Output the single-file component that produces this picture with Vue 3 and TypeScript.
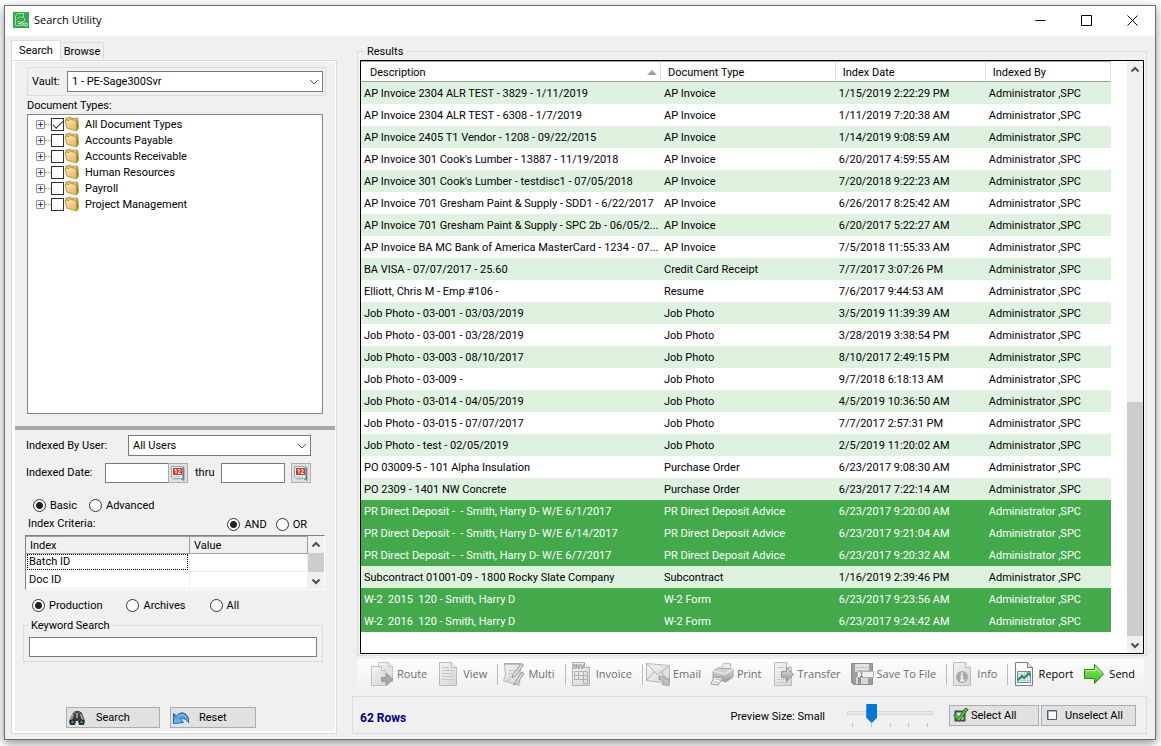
<script setup lang="ts">
import { computed, ref } from 'vue'

interface ResultRow {
  description: string
  type: string
  date: string
  selected?: boolean
}

interface DocType {
  name: string
  checked: boolean
}

interface Tool {
  label: string
  icon: string
  caption?: string
  enabled?: boolean
  separated?: boolean
}

const vault = ref('1 - PE-Sage300Svr')
const user = ref('All Users')
const dateFrom = ref('')
const dateTo = ref('')
const mode = ref('Basic')
const joiner = ref('AND')
const scope = ref('Production')
const keyword = ref('')
const previewSize = ref(1)

const docTypes = ref<DocType[]>([
  { name: 'All Document Types', checked: true },
  { name: 'Accounts Payable', checked: false },
  { name: 'Accounts Receivable', checked: false },
  { name: 'Human Resources', checked: false },
  { name: 'Payroll', checked: false },
  { name: 'Project Management', checked: false },
])

const criteria = ['Batch ID', 'Doc ID']

const rows = ref<ResultRow[]>([
  { description: 'AP Invoice 2304 ALR TEST - 3829 - 1/11/2019', type: 'AP Invoice', date: '1/15/2019 2:22:29 PM' },
  { description: 'AP Invoice 2304 ALR TEST - 6308 - 1/7/2019', type: 'AP Invoice', date: '1/11/2019 7:20:38 AM' },
  { description: 'AP Invoice 2405 T1 Vendor - 1208 - 09/22/2015', type: 'AP Invoice', date: '1/14/2019 9:08:59 AM' },
  { description: "AP Invoice 301 Cook's Lumber - 13887 - 11/19/2018", type: 'AP Invoice', date: '6/20/2017 4:59:55 AM' },
  { description: "AP Invoice 301 Cook's Lumber - testdisc1 - 07/05/2018", type: 'AP Invoice', date: '7/20/2018 9:22:23 AM' },
  { description: 'AP Invoice 701 Gresham Paint & Supply - SDD1 - 6/22/2017', type: 'AP Invoice', date: '6/26/2017 8:25:42 AM' },
  { description: 'AP Invoice 701 Gresham Paint & Supply - SPC 2b - 06/05/2...', type: 'AP Invoice', date: '6/20/2017 5:22:27 AM' },
  { description: 'AP Invoice BA MC Bank of America MasterCard - 1234 - 07...', type: 'AP Invoice', date: '7/5/2018 11:55:33 AM' },
  { description: 'BA VISA - 07/07/2017 - 25.60', type: 'Credit Card Receipt', date: '7/7/2017 3:07:26 PM' },
  { description: 'Elliott, Chris M - Emp #106 -', type: 'Resume', date: '7/6/2017 9:44:53 AM' },
  { description: 'Job Photo - 03-001 - 03/03/2019', type: 'Job Photo', date: '3/5/2019 11:39:39 AM' },
  { description: 'Job Photo - 03-001 - 03/28/2019', type: 'Job Photo', date: '3/28/2019 3:38:54 PM' },
  { description: 'Job Photo - 03-003 - 08/10/2017', type: 'Job Photo', date: '8/10/2017 2:49:15 PM' },
  { description: 'Job Photo - 03-009 -', type: 'Job Photo', date: '9/7/2018 6:18:13 AM' },
  { description: 'Job Photo - 03-014 - 04/05/2019', type: 'Job Photo', date: '4/5/2019 10:36:50 AM' },
  { description: 'Job Photo - 03-015 - 07/07/2017', type: 'Job Photo', date: '7/7/2017 2:57:31 PM' },
  { description: 'Job Photo - test - 02/05/2019', type: 'Job Photo', date: '2/5/2019 11:20:02 AM' },
  { description: 'PO 03009-5 - 101 Alpha Insulation', type: 'Purchase Order', date: '6/23/2017 9:08:30 AM' },
  { description: 'PO 2309 - 1401 NW Concrete', type: 'Purchase Order', date: '6/23/2017 7:22:14 AM' },
  { description: 'PR Direct Deposit -  - Smith, Harry D- W/E 6/1/2017', type: 'PR Direct Deposit Advice', date: '6/23/2017 9:20:00 AM', selected: true },
  { description: 'PR Direct Deposit -  - Smith, Harry D- W/E 6/14/2017', type: 'PR Direct Deposit Advice', date: '6/23/2017 9:21:04 AM', selected: true },
  { description: 'PR Direct Deposit -  - Smith, Harry D- W/E 6/7/2017', type: 'PR Direct Deposit Advice', date: '6/23/2017 9:20:32 AM', selected: true },
  { description: 'Subcontract 01001-09 - 1800 Rocky Slate Company', type: 'Subcontract', date: '1/16/2019 2:39:46 PM' },
  { description: 'W-2  2015  120 - Smith, Harry D', type: 'W-2 Form', date: '6/23/2017 9:23:56 AM', selected: true },
  { description: 'W-2  2016  120 - Smith, Harry D', type: 'W-2 Form', date: '6/23/2017 9:24:42 AM', selected: true },
])

const tools: Tool[] = [
  { label: 'Route', icon: 'route' },
  { label: 'View', icon: 'view' },
  { label: 'Multi', icon: 'multi', separated: true },
  { label: 'Invoice', icon: 'invoice', caption: 'INV', separated: true },
  { label: 'Email', icon: 'email', separated: true },
  { label: 'Print', icon: 'print' },
  { label: 'Transfer', icon: 'transfer' },
  { label: 'Save To File', icon: 'save' },
  { label: 'Info', icon: 'info', separated: true },
  { label: 'Report', icon: 'report', enabled: true, separated: true },
  { label: 'Send', icon: 'send', enabled: true },
]

const sizeNames = ['Tiny', 'Small', 'Medium', 'Large', 'Huge']
const sizeName = computed(() => sizeNames[Number(previewSize.value)])

function setAll(selected: boolean) {
  rows.value.forEach((row) => { row.selected = selected })
}
</script>

<template>
  <svg class="sprites" aria-hidden="true">
    <defs>
      <linearGradient id="g-paper" x1="0" y1="0" x2="1" y2="1">
        <stop offset="0" stop-color="#f4f4f4" /><stop offset="1" stop-color="#d6d6d6" />
      </linearGradient>
      <linearGradient id="g-metal" x1="0" y1="0" x2="0" y2="1">
        <stop offset="0" stop-color="#dcdcdc" /><stop offset="1" stop-color="#9c9c9c" />
      </linearGradient>
      <linearGradient id="g-folder" x1="0" y1="0" x2="1" y2="1">
        <stop offset="0" stop-color="#fbe9b4" /><stop offset=".5" stop-color="#fbc795" /><stop offset="1" stop-color="#c4c23e" />
      </linearGradient>
      <linearGradient id="g-green" x1="0" y1="0" x2="0" y2="1">
        <stop offset="0" stop-color="#a5f07c" /><stop offset=".5" stop-color="#5fd83c" /><stop offset="1" stop-color="#3fb81f" />
      </linearGradient>
      <linearGradient id="g-blue" x1="0" y1="0" x2="0" y2="1">
        <stop offset="0" stop-color="#2d7fc4" /><stop offset="1" stop-color="#7cc6f2" />
      </linearGradient>
    </defs>
    <symbol id="route" viewBox="0 0 24 24">
      <path d="M8.500 .5h10l4 4v15h-14z" fill="url(#g-paper)" stroke="#c4c4c4" />
      <path d="M18.500 .5v4h4" fill="#eee" stroke="#c4c4c4" />
      <path d="M1.500 4.500h10l4 4v15h-14z" fill="url(#g-paper)" stroke="#c0c0c0" />
      <path d="M11.500 4.500v4h4" fill="#f6f6f6" stroke="#c0c0c0" />
      <path d="M11.500 15.500h5v-4l6.500 6-6.500 6v-4h-5z" fill="#a9a9a9" stroke="#989898" />
    </symbol>
    <symbol id="view" viewBox="0 0 24 24">
      <path d="M3.500 .5h12l5 5v18h-17z" fill="url(#g-paper)" stroke="#bcbcbc" />
      <path d="M15.500 .5v5h5" fill="#f6f6f6" stroke="#bcbcbc" />
      <path d="M6 8.500h12M6 11.500h12M6 14.500h12M6 17.500h12M6 5.500h7" stroke="#c9c9c9" />
    </symbol>
    <symbol id="multi" viewBox="0 0 24 24">
      <path d="M3.500 1.500h15l1 4-1 18-16-5 2-5z" fill="url(#g-paper)" stroke="#b5b5b5" />
      <path d="M3.500 2h18" stroke="#9a9a9a" stroke-width="2" stroke-dasharray="1 1" />
      <path d="M7 8.500h7M7 11.500h4M8 15h3M5 18h5" stroke="#c6c6c6" />
      <path d="m12 12 8.500-10.500 2 1.500L14 14.500l-3 1z" fill="#dcdcdc" stroke="#999" />
      <path d="m14 20 7-10 2 1.500-7 10-3.500 1.500z" fill="#dcdcdc" stroke="#999" />
    </symbol>
    <symbol id="invoice" viewBox="0 0 24 24">
      <path d="M3.500 .5h12l5 5v18h-17z" fill="url(#g-paper)" stroke="#b0b0b0" />
      <path d="M15.500 .5v5h5" fill="#f6f6f6" stroke="#b0b0b0" />
      <path d="M5.500 9.500h13v8h-13zM5.500 13.500h13M9.500 9.500v8M14.500 9.500v12M14.500 21.500h4v-4" fill="none" stroke="#b0b0b0" />
    </symbol>
    <symbol id="email" viewBox="0 0 24 24">
      <path d="m.5 1.500 23 2v18l-23-3z" fill="url(#g-paper)" stroke="#b9b9b9" />
      <path d="m.5 1.500 11 11 12-9M.5 18.500l8-9M23.500 21.500l-8-11.500" fill="none" stroke="#adadad" />
      <path d="M13 14.500c4-1 6 0 7 3l3-1v7l-7-1 2-2c-1-2-3-3-5-3z" fill="#c2c2c2" stroke="#9b9b9b" />
    </symbol>
    <symbol id="print" viewBox="0 0 24 24">
      <path d="m10 8 4-7 7 1-2 8z" fill="#eee" stroke="#b8b8b8" />
      <path d="m3 9 5-3 15 1v8l-7 5-13-4z" fill="url(#g-metal)" stroke="#a3a3a3" />
      <path d="m3 9 12 3 8-5" fill="none" stroke="#e4e4e4" stroke-width="2" />
      <path d="m4 15 9 1-5 7-7-1z" fill="#f1f1f1" stroke="#9d9d9d" />
      <path d="m5 17 6 1M4 20l5 1" stroke="#bdbdbd" />
    </symbol>
    <symbol id="transfer" viewBox="0 0 24 24">
      <path d="M3.500 .5h12l5 5v18h-17z" fill="url(#g-paper)" stroke="#bcbcbc" />
      <path d="M15.500 .5v5h5" fill="#f6f6f6" stroke="#bcbcbc" />
      <path d="M6 5.500h7M6 17.500h12M6 20.500h12" stroke="#c9c9c9" />
      <path d="M10.500 9.500h5v-4l7 7-7 7v-4h-5z" fill="url(#g-metal)" stroke="#949494" />
    </symbol>
    <symbol id="save" viewBox="0 0 24 24">
      <path d="M1.500 1.500h21v21h-19l-2-2z" fill="#9d9d9d" stroke="#8b8b8b" />
      <path d="M5 2h14v8H5z" fill="#e2e2e2" />
      <path d="M5 5.500h14M5 8.500h14" stroke="#c2c2c2" />
      <path d="M6 15h12v7H6z" fill="#d8d8d8" /><path d="M8 16h3v6H8z" fill="#909090" />
      <path d="M7.500 9.500h16v6h-16z" fill="#f0f0f0" stroke="#b0b0b0" />
      <path d="M10 11h3M11.500 11v3M10 14.500h3" stroke="#8a8a8a" />
    </symbol>
    <symbol id="info" viewBox="0 0 24 24">
      <path d="M3.500 .5h12l5 5v18h-17z" fill="url(#g-paper)" stroke="#bcbcbc" />
      <path d="M15.500 .5v5h5" fill="#f6f6f6" stroke="#bcbcbc" />
      <circle cx="12" cy="15" r="6" fill="#a8a8a8" />
      <path d="M12 10.500v2M10.500 14H12v4.500M10 18.500h4.500" fill="none" stroke="#eee" stroke-width="2" />
    </symbol>
    <symbol id="report" viewBox="0 0 24 24">
      <path d="M3.500 .5h12l5 5v18h-17z" fill="#fbfbfb" stroke="#777d84" />
      <path d="M15.500 .5v5h5" fill="#dfe3e8" stroke="#777d84" />
      <path d="M5.500 9.500h13v11h-13z" fill="#e3f1fb" stroke="#6d8ba8" />
      <path d="M6 12.500h12M6 15.500h12M6 18.500h12M9.500 10v10M12.500 10v10M15.500 10v10" stroke="#b6d2e8" />
      <path d="m6 18 4-4 2 2 5-4.500" fill="none" stroke="#27933a" stroke-width="2" />
      <path d="M14 10.500h4v4z" fill="#27933a" />
    </symbol>
    <symbol id="send" viewBox="0 0 24 24">
      <path d="M2.500 7.500h10v-5l9 9.500-9 9.500v-5h-10z" fill="url(#g-green)" stroke="#2f8a1c" stroke-linejoin="round" />
      <path d="M3.500 8.500h10v-3.500l6 6.500" fill="none" stroke="#c5f8a8" />
    </symbol>
    <symbol id="folder" viewBox="0 0 16 16">
      <path d="M1.500 2.500 6 1l2 1.500L13.500 2l1 10-2 3z" fill="#e3c45c" stroke="#b8963c" stroke-linejoin="round" />
      <path d="m1 4 4 .5L6.500 3l6 2v10L2.500 12z" fill="url(#g-folder)" stroke="#c09c40" stroke-linejoin="round" />
      <path d="m12.500 5 1.500-2 .5 9-2 3z" fill="#a88a2c" />
    </symbol>
    <symbol id="calendar" viewBox="0 0 16 16">
      <path d="m11 1.500 3 1v13l-3-1.500z" fill="#5f7482" stroke="#7e909c" />
      <path d="M1.500 1.500h11v12l-9 .5-2-2z" fill="#e6eff5" stroke="#8fa3b0" />
      <path d="M3 3h9v7H3z" fill="#cf3a1d" />
      <path d="M4.500 5 6 4.500v4M8 5.500C8 4 10.500 4 10.500 5.500L8 8.500h3" fill="none" stroke="#fff" />
      <path d="M3 12h7" stroke="#a9c3d4" />
    </symbol>
    <symbol id="binoculars" viewBox="0 0 16 16">
      <path d="m4 3 3-2h3l3 2 3 8-1 4h-5l-1-4H7l-1 4H1l-1-4z" fill="#3a3a38" />
      <path d="M4.500 4 2 10M11.500 4 14 10M8 3v5" stroke="#9c968b" stroke-width="2" />
      <circle cx="3.500" cy="12" r="2" fill="#3f86b5" stroke="#16191c" />
      <circle cx="12.500" cy="12" r="2" fill="#3f86b5" stroke="#16191c" />
      <path d="M5 2.500h2M9 2.500h2" stroke="#6f695f" stroke-width="2" />
    </symbol>
    <symbol id="undo" viewBox="0 0 16 16">
      <path d="m.5 3.500 3 2.500C7 1 14 2 15.500 9v3.500C13 9 10 8 7.500 9l3 3.500-10 1z" fill="url(#g-blue)" stroke="#1d65a6" stroke-linejoin="round" />
      <path d="M4 7.500C7 4 11 4 13 7" fill="none" stroke="#b9e1f8" />
    </symbol>
    <symbol id="tick" viewBox="0 0 16 16">
      <path d="M2.500 4.500h9v9h-9z" fill="#e6ebee" stroke="#3d4d57" stroke-width="2" />
      <path d="m2.500 6.500 3 4L12.500 1l2.500 1.500L6 14.500 .5 8.500z" fill="#5bbb3b" stroke="#1f6d12" stroke-linejoin="round" />
    </symbol>
    <symbol id="box" viewBox="0 0 16 16">
      <path d="M3.500 3.500h9v9h-9z" fill="#fafafa" stroke="#4c5b69" />
      <path d="M4.500 12V4.500H12" fill="none" stroke="#9db4c6" />
    </symbol>
    <symbol id="logo" viewBox="0 0 16 16">
      <path d="M0 0h16v16H0z" fill="#35a84a" />
      <path d="M2.500 13V4l2-2.500h6V5M2.500 13.500H7" fill="none" stroke="#a6dcae" />
      <path d="M4.500 6.500c2-2 6-2 7 0M4.500 9c2 1.500 5 1.500 7 0V6.500" fill="none" stroke="#a6dcae" />
      <path d="M5 11.500h3" stroke="#c8ebcd" />
      <circle cx="9" cy="12" r="1.500" fill="none" stroke="#d9f2dc" />
      <circle cx="13" cy="12.500" r="1.500" fill="none" stroke="#d9f2dc" />
    </symbol>
    <symbol id="up" viewBox="0 0 10 10"><path d="m1.500 6.500 3.500-3.500 3.500 3.500" fill="none" stroke="#505050" stroke-width="2" /></symbol>
    <symbol id="down" viewBox="0 0 10 10"><path d="m1.500 3.500 3.500 3.500 3.500-3.500" fill="none" stroke="#505050" stroke-width="2" /></symbol>
    <symbol id="chevron" viewBox="0 0 10 10"><path d="m1 3 4 4 4-4" fill="none" stroke="#555" /></symbol>
  </svg>

  <div class="desktop">
    <div class="window">
      <header class="titlebar">
        <svg class="i16"><use href="#logo" /></svg>
        <h1>Search Utility</h1>
        <button class="caption" aria-label="Minimize">
          <svg viewBox="0 0 11 11"><path d="M.5 5.500h10" /></svg>
        </button>
        <button class="caption" aria-label="Maximize">
          <svg viewBox="0 0 11 11"><path d="M.5 .5h10v10H.5z" /></svg>
        </button>
        <button class="caption" aria-label="Close">
          <svg viewBox="0 0 11 11"><path d="m.5 .5 10 10M10.500 .5l-10 10" /></svg>
        </button>
      </header>

      <main class="client">
        <section class="side">
          <div class="tabs" role="tablist">
            <button class="tab active" role="tab" aria-selected="true">Search</button>
            <button class="tab" role="tab" aria-selected="false">Browse</button>
          </div>
          <div class="page">
            <div class="upper">
              <div class="vault">
                <label for="vault">Vault:</label>
                <span class="picker">
                  <select id="vault" v-model="vault"><option>1 - PE-Sage300Svr</option></select>
                  <svg class="i10"><use href="#chevron" /></svg>
                </span>
              </div>
              <h2>Document Types:</h2>
              <ul class="tree">
                <li v-for="doc in docTypes" :key="doc.name">
                  <button class="expander" :aria-label="`Expand ${doc.name}`">
                    <svg viewBox="0 0 7 7"><path d="M1 3.500h5M3.500 1v5" /></svg>
                  </button>
                  <label>
                    <input v-model="doc.checked" type="checkbox">
                    <svg class="i16"><use href="#folder" /></svg>
                    <span>{{ doc.name }}</span>
                  </label>
                </li>
              </ul>
            </div>
            <div class="splitter"></div>
            <div class="lower">
              <div class="row user">
                <label for="user">Indexed By User:</label>
                <span class="picker">
                  <select id="user" v-model="user"><option>All Users</option></select>
                  <svg class="i10"><use href="#chevron" /></svg>
                </span>
              </div>
              <div class="row dates">
                <label for="from">Indexed Date:</label>
                <input id="from" v-model="dateFrom" type="text">
                <button class="cal joined" aria-label="Pick start date"><svg class="i16"><use href="#calendar" /></svg></button>
                <label class="thru" for="to">thru</label>
                <input id="to" v-model="dateTo" type="text">
                <button class="cal" aria-label="Pick end date"><svg class="i16"><use href="#calendar" /></svg></button>
              </div>
              <div class="row modes">
                <label v-for="m in ['Basic', 'Advanced']" :key="m" class="radio">
                  <input v-model="mode" type="radio" name="mode" :value="m"><span>{{ m }}</span>
                </label>
              </div>
              <div class="row joiners">
                <span class="caption-text">Index Criteria:</span>
                <label v-for="j in ['AND', 'OR']" :key="j" class="radio">
                  <input v-model="joiner" type="radio" name="joiner" :value="j"><span>{{ j }}</span>
                </label>
              </div>
              <div class="criteria">
                <table>
                  <colgroup><col class="c-index"><col></colgroup>
                  <thead><tr><th>Index</th><th>Value</th></tr></thead>
                  <tbody>
                    <tr v-for="(c, i) in criteria" :key="c">
                      <td><span :class="{ focused: i === 0 }">{{ c }}</span></td><td></td>
                    </tr>
                  </tbody>
                </table>
                <div class="scroll small">
                  <button aria-label="Scroll up"><svg class="i10"><use href="#up" /></svg></button>
                  <div class="track"><div class="thumb"></div></div>
                  <button aria-label="Scroll down"><svg class="i10"><use href="#down" /></svg></button>
                </div>
              </div>
              <div class="row scopes">
                <label v-for="s in ['Production', 'Archives', 'All']" :key="s" class="radio">
                  <input v-model="scope" type="radio" name="scope" :value="s"><span>{{ s }}</span>
                </label>
              </div>
              <fieldset class="keyword">
                <legend>Keyword Search</legend>
                <input v-model="keyword" type="text" aria-label="Keyword Search">
              </fieldset>
              <div class="row actions">
                <button class="push search"><svg class="i16"><use href="#binoculars" /></svg><span>Search</span></button>
                <button class="push reset"><svg class="i16"><use href="#undo" /></svg><span>Reset</span></button>
              </div>
            </div>
          </div>
        </section>

        <section class="content">
          <fieldset class="results">
            <legend>Results</legend>
            <div class="list">
              <div class="grid">
                <table>
                  <colgroup><col class="c-desc"><col class="c-type"><col class="c-date"><col></colgroup>
                  <thead>
                    <tr>
                      <th><span class="sorted">Description<i></i></span></th>
                      <th>Document Type</th>
                      <th>Index Date</th>
                      <th>Indexed By</th>
                    </tr>
                  </thead>
                  <tbody>
                    <tr v-for="row in rows" :key="row.description" :class="{ selected: row.selected }">
                      <td>{{ row.description }}</td>
                      <td>{{ row.type }}</td>
                      <td>{{ row.date }}</td>
                      <td>Administrator ,SPC</td>
                    </tr>
                  </tbody>
                </table>
              </div>
              <div class="scroll">
                <button aria-label="Scroll up"><svg class="i10"><use href="#up" /></svg></button>
                <div class="track"><div class="thumb"></div></div>
                <button aria-label="Scroll down"><svg class="i10"><use href="#down" /></svg></button>
              </div>
            </div>
          </fieldset>

          <div class="toolbar" role="toolbar">
            <template v-for="tool in tools" :key="tool.label">
              <span v-if="tool.separated" class="sep"></span>
              <button :disabled="!tool.enabled">
                <svg class="i24">
                  <use :href="`#${tool.icon}`" />
                  <text v-if="tool.caption" class="icon-text" x="4" y="7">{{ tool.caption }}</text>
                </svg>
                <span>{{ tool.label }}</span>
              </button>
            </template>
          </div>

          <footer class="status">
            <strong>62 Rows</strong>
            <label for="size">Preview Size: {{ sizeName }}</label>
            <div class="slider">
              <input id="size" v-model="previewSize" type="range" min="0" max="4">
              <div class="ticks"><i v-for="n in 5" :key="n"></i></div>
            </div>
            <button class="push all" @click="setAll(true)"><svg class="i16"><use href="#tick" /></svg><span>Select All</span></button>
            <button class="push none" @click="setAll(false)"><svg class="i16"><use href="#box" /></svg><span>Unselect All</span></button>
          </footer>
        </section>
      </main>
    </div>
  </div>
</template>

<style>
body { margin: 0; background: #fff; }
</style>

<style scoped>
* { box-sizing: border-box; }
.sprites { position: absolute; width: 0; height: 0; }
svg { display: block; flex: none; }
.i10 { width: 10px; height: 10px; }
.i16 { width: 16px; height: 16px; }
.i24 { width: 24px; height: 24px; }
button, input, select { font: inherit; color: inherit; border-radius: 0; margin: 0; }
button { padding: 0; border: 0; background: none; white-space: nowrap; }
h1, h2 { margin: 0; font: inherit; }
fieldset { margin: 0; min-width: 0; border: 1px solid #dcdcdc; }
table { border-collapse: separate; border-spacing: 0; table-layout: fixed; width: 100%; }
th, td { padding: 0; text-align: left; font-weight: 400; white-space: pre; overflow: hidden; }

.desktop {
  display: flex;
  min-height: 100vh;
  padding: 5px 5px 6px 4px;
  overflow: hidden;
  font: 11px/14px Roboto, "Liberation Sans", sans-serif;
  color: #000;
}
.window {
  flex: 1;
  display: flex;
  flex-direction: column;
  min-width: 0;
  border: 1px solid #6e6e6e;
  background: #f0f0f0;
  box-shadow: 0 3px 9px rgba(0, 0, 0, .45);
}
.titlebar { display: flex; align-items: center; height: 30px; padding: 0 0 2px 8px; background: #fff; }
.titlebar h1 { flex: 1; margin-left: 5px; font: 11px/16px "Open Sans", "Noto Sans", sans-serif; }
.caption { display: flex; justify-content: center; align-items: center; width: 46px; height: 28px; }
.caption svg { width: 11px; height: 11px; fill: none; stroke: #000; }
.client { flex: 1; display: flex; gap: 15px; padding: 4px 8px 5px 6px; }

.side { flex: none; display: flex; flex-direction: column; width: 326px; }
.tabs { display: flex; align-items: flex-end; height: 20px; }
.tab { width: 43px; height: 18px; border: 1px solid #dcdcdc; border-width: 1px 1px 0 0; background: #f0f0f0; }
.tab.active { width: 50px; height: 20px; border-left-width: 1px; background: #fff; }
.page { flex: 1; display: flex; flex-direction: column; padding: 1px 1px 2px 3px; border: 1px solid #dcdcdc; background: #fff; }
.upper { flex: 1; display: flex; flex-direction: column; padding: 5px 12px 12px; background: #f0f0f0; }
.vault { display: flex; align-items: center; height: 29px; margin-right: -3px; padding: 0 2px 0 4px; border: 1px solid #dcdcdc; }
.vault label { width: 35px; }
.upper h2 { padding-top: 2px; line-height: 16px; }
.tree { flex: 1; margin: 0; padding: 1px 8px; border: 1px solid #828790; background: #fff; list-style: none; }
.tree li { display: flex; align-items: center; height: 16px; }
.expander { width: 9px; height: 9px; border: 1px solid #919191; border-radius: 1px; background: #f4f4f4; }
.expander svg { width: 7px; height: 7px; fill: none; stroke: #2d4a9c; }
.tree label { display: flex; align-items: center; }
.tree label::before { content: ""; width: 6px; border-top: 1px dotted #909090; }
.tree input { appearance: none; width: 13px; height: 13px; border: 1px solid #333; background: #fff; }
.tree input:checked::before { content: ""; display: block; width: 9px; height: 4px; margin: 2px 1px; border: solid #333; border-width: 0 0 1px 1px; transform: rotate(-45deg); }
.tree span { margin-left: 5px; padding-top: 2px; }
.picker { flex: 1; position: relative; display: flex; }
.picker select { appearance: none; width: 100%; height: 21px; padding: 0 4px; border: 1px solid #7a7a7a; background: #fff; }
.picker svg { position: absolute; right: 4px; top: 6px; pointer-events: none; }
.splitter { height: 4px; background: #a8a8a8; }
.lower { padding: 5px 10px 3px 8px; background: #f0f0f0; }
.row { display: flex; align-items: center; }
.user { padding: 0 14px 0 3px; }
.user label { width: 102px; }
.dates { margin-top: 7px; padding-left: 3px; }
.dates label { width: 79px; }
.dates .thru { width: 26px; }
.dates input { width: 64px; height: 20px; padding: 0 3px; border: 1px solid #7a7a7a; background: #fff; }
.cal { display: flex; justify-content: center; align-items: center; width: 20px; height: 20px; margin-left: 6px; border: 1px solid #adadad; background: #e1e1e1; }
.cal.joined { margin: 0 7px 0 -1px; }
.modes { gap: 12px; margin-top: 15px; padding-left: 10px; }
.joiners { gap: 9px; margin-top: 5px; padding: 0 18px 0 5px; }
.caption-text { flex: 1; }
.radio { display: flex; align-items: center; gap: 4px; height: 14px; }
.radio span { padding-top: 1px; }
.radio input { appearance: none; width: 13px; height: 13px; border: 1px solid #333; border-radius: 50%; background: #fff; }
.radio input:checked { background: radial-gradient(circle, #222 0 3px, #fff 4px); }
.criteria { display: flex; width: 300px; height: 55px; margin: 4px 0 0 2px; border: 1px solid #fff; border-color: #828282 #fff #fff #828282; background: #fff; }
.criteria table { flex: 1; }
.c-index { width: 164px; }
.criteria th { height: 18px; padding: 1px 0 0 4px; border: 1px solid #a0a0a0; border-width: 1px 1px 1px 0; background: #f0f0f0; }
.criteria td { height: 17px; padding: 0 1px; border: 1px solid #f0f0f0; border-width: 0 1px 1px 0; }
.criteria td span { display: block; padding: 0 1px; border: 1px solid transparent; }
.criteria td .focused { border: 1px dotted #000; }
.scopes { gap: 24px; margin-top: 8px; padding-left: 9px; }
.keyword { margin: 5px 2px 0 0; padding: 4px 5px; }
.keyword legend { padding: 2px 2px 0; }
.keyword input { display: block; width: 100%; height: 20px; border: 1px solid #7a7a7a; background: #fff; }
.actions { gap: 10px; margin-top: 45px; padding-left: 43px; }
.push { display: flex; align-items: center; height: 21px; padding: 0 2px; border: 1px solid #adadad; background: #e1e1e1; }
.push span { padding-top: 1px; }
.push.search { width: 94px; gap: 11px; }
.push.reset { width: 86px; gap: 10px; }

.scroll { flex: none; display: flex; flex-direction: column; width: 16px; background: #f0f0f0; }
.scroll button { display: flex; justify-content: center; align-items: center; height: 17px; }
.track { flex: 1; display: flex; flex-direction: column; justify-content: flex-end; }
.thumb { height: 42%; background: #cdcdcd; }
.small .thumb { height: 100%; }

.content { flex: 1; display: flex; flex-direction: column; min-width: 0; }
.results { flex: 1; display: flex; margin: 3px 0 0 5px; padding: 1px 2px 1px; }
.results legend { margin-left: 4px; padding: 2px 3px 0; }
.list { flex: 1; display: flex; min-width: 0; border: 1px solid #000; background: #fff; }
.grid { flex: 1; min-width: 0; padding-right: 16px; }
.c-desc { width: 40%; }
.c-type { width: 23.3%; }
.c-date { width: 20%; }
.grid th { height: 21px; padding: 2px 7px 0; border: 1px solid #a0a0a0; border-right-color: #dedede; border-left: 0; }
.grid th:first-child { padding-left: 9px; }
.grid td { height: 22px; padding: 2px 2px 0 3px; }
.grid tbody tr:nth-child(odd) { background: #dff2e0; }
.grid tbody tr.selected { background: #43a94b; color: #fff; }
.sorted { display: flex; justify-content: space-between; align-items: center; }
.sorted i { border: 5px solid transparent; border-top: 0; border-bottom-color: #a0a0a0; margin-right: -4px; }

.toolbar { display: flex; align-items: center; height: 30px; margin: 3px 3px 0 5px; padding-left: 13px; border-radius: 3px; background: linear-gradient(#fdfdfd, #f0f0f0); font: 11px/16px "Open Sans", "Noto Sans", sans-serif; }
.toolbar button { display: flex; align-items: center; gap: 3px; margin-right: 9px; }
.toolbar button:disabled { color: #6d6d6d; }
.icon-text { font: 700 7px "Liberation Sans", sans-serif; fill: #8c8c8c; }
.sep { width: 1px; height: 21px; margin: 0 4px 0 1px; background: #bdbdbd; }
.status { display: flex; align-items: center; height: 38px; margin-top: 7px; padding: 0 10px 0 7px; border: 1px solid #dcdcdc; }
.status strong { flex: 1; padding-top: 6px; font-size: 12px; font-weight: 700; color: #000080; }
.status label { padding-top: 4px; }
.slider { width: 86px; margin: 0 16px 0 22px; }
.slider input { appearance: none; display: block; width: 100%; height: 20px; padding: 0; background: none; }
.slider input::-webkit-slider-runnable-track { height: 4px; border: 1px solid #d6d6d6; background: #e7eaea; }
.slider input::-webkit-slider-thumb { appearance: none; width: 11px; height: 19px; margin-top: -8px; background: #0078d7; clip-path: polygon(0 0, 100% 0, 100% 72%, 50% 100%, 0 72%); }
.ticks { display: flex; justify-content: space-between; padding: 0 5px; }
.ticks i { width: 1px; height: 4px; background: #c4c4c4; }
.push.all { width: 90px; gap: 2px; padding-left: 3px; }
.push.none { width: 95px; gap: 5px; margin-left: 2px; }
</style>
